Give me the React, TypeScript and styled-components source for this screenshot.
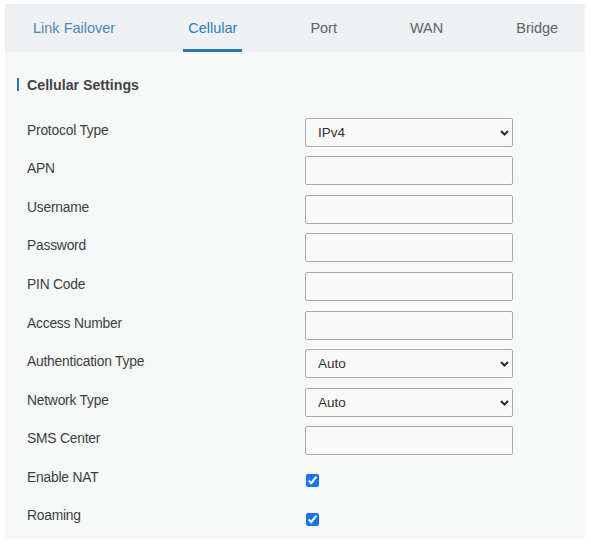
import React from "react";
import styled, { createGlobalStyle } from "styled-components";

const GlobalStyle = createGlobalStyle`
  html, body {
    margin: 0;
    padding: 0;
    background: #ffffff;
    font-family: "Liberation Sans", Arial, sans-serif;
  }
`;

const Panel = styled.div`
  width: 580px;
  height: 535px;
  margin: 4px 0 0 5px;
  background: #f7f8f8;
  box-sizing: border-box;
`;

const TabBar = styled.div`
  display: flex;
  align-items: stretch;
  height: 48px;
  padding-left: 23px;
  gap: 63px;
  background: #eef1f3;
`;

const Tab = styled.div<{ $active?: boolean; $tint?: boolean }>`
  display: flex;
  align-items: center;
  padding: 0 5px;
  font-size: 14.5px;
  color: ${(p) => (p.$active ? "#2f7fb8" : p.$tint ? "#4f87b3" : "#5e6467")};
  border-bottom: 3px solid ${(p) => (p.$active ? "#2778b0" : "transparent")};
  padding-top: 3px;
`;

const SectionTitle = styled.div`
  display: flex;
  align-items: center;
  gap: 8px;
  margin: 22px 0 18px 12px;
  height: 21px;
  font-size: 14.2px;
  font-weight: bold;
  color: #3f4447;
  &::before {
    content: "";
    display: block;
    width: 2px;
    height: 13px;
    background: #2778b0;
  }
`;

const Form = styled.div`
  display: flex;
  flex-direction: column;
  padding-left: 22px;
`;

const Row = styled.div`
  display: grid;
  grid-template-columns: 278px 208px;
  align-items: center;
  height: 38.55px;
`;

const Label = styled.div`
  font-size: 13.8px;
  letter-spacing: -0.2px;
  color: #3a3f42;
  margin-bottom: 4px;
`;

const TextInput = styled.input`
  width: 208px;
  height: 29px;
  box-sizing: border-box;
  border: 1px solid #a8abad;
  border-radius: 2px;
  background: #f9f9f9;
  outline: none;
`;

const SelectWrap = styled.div`
  position: relative;
  width: 208px;
  height: 29px;
`;

const Select = styled.select`
  appearance: none;
  width: 100%;
  height: 100%;
  box-sizing: border-box;
  border: 1px solid #a8abad;
  border-radius: 2px;
  background: #f9f9f9;
  padding: 0 0 0 12px;
  font-family: "Liberation Sans", Arial, sans-serif;
  font-size: 13.5px;
  color: #333;
  outline: none;
`;

const Chevron = styled.svg`
  position: absolute;
  right: 4px;
  top: 12px;
  pointer-events: none;
`;

const Check = styled.input`
  width: 13px;
  height: 13px;
  margin: 7px 0 0 1px;
  accent-color: #1a73e8;
`;

const ChevronIcon = () => (
  <Chevron width="9" height="6" viewBox="0 0 9 6">
    <path d="M1 1L4.5 4.5L8 1" stroke="#2b2b2b" strokeWidth="2" fill="none" />
  </Chevron>
);

type Field =
  | { label: string; kind: "select"; value: string }
  | { label: string; kind: "text" }
  | { label: string; kind: "check" };

const fields: Field[] = [
  { label: "Protocol Type", kind: "select", value: "IPv4" },
  { label: "APN", kind: "text" },
  { label: "Username", kind: "text" },
  { label: "Password", kind: "text" },
  { label: "PIN Code", kind: "text" },
  { label: "Access Number", kind: "text" },
  { label: "Authentication Type", kind: "select", value: "Auto" },
  { label: "Network Type", kind: "select", value: "Auto" },
  { label: "SMS Center", kind: "text" },
  { label: "Enable NAT", kind: "check" },
  { label: "Roaming", kind: "check" },
];

const renderControl = (f: Field) => {
  if (f.kind === "select") {
    return (
      <SelectWrap>
        <Select defaultValue={f.value}>
          <option>{f.value}</option>
        </Select>
        <ChevronIcon />
      </SelectWrap>
    );
  }
  if (f.kind === "check") {
    return (
      <div>
        <Check type="checkbox" defaultChecked />
      </div>
    );
  }
  return <TextInput type="text" />;
};

export default function App() {
  return (
    <>
      <GlobalStyle />
      <Panel>
        <TabBar>
          <Tab $tint>Link Failover</Tab>
          <Tab $active>Cellular</Tab>
          <Tab>Port</Tab>
          <Tab>WAN</Tab>
          <Tab>Bridge</Tab>
        </TabBar>
        <SectionTitle>Cellular Settings</SectionTitle>
        <Form>
          {fields.map((f) => (
            <Row key={f.label}>
              <Label>{f.label}</Label>
              {renderControl(f)}
            </Row>
          ))}
        </Form>
      </Panel>
    </>
  );
}
